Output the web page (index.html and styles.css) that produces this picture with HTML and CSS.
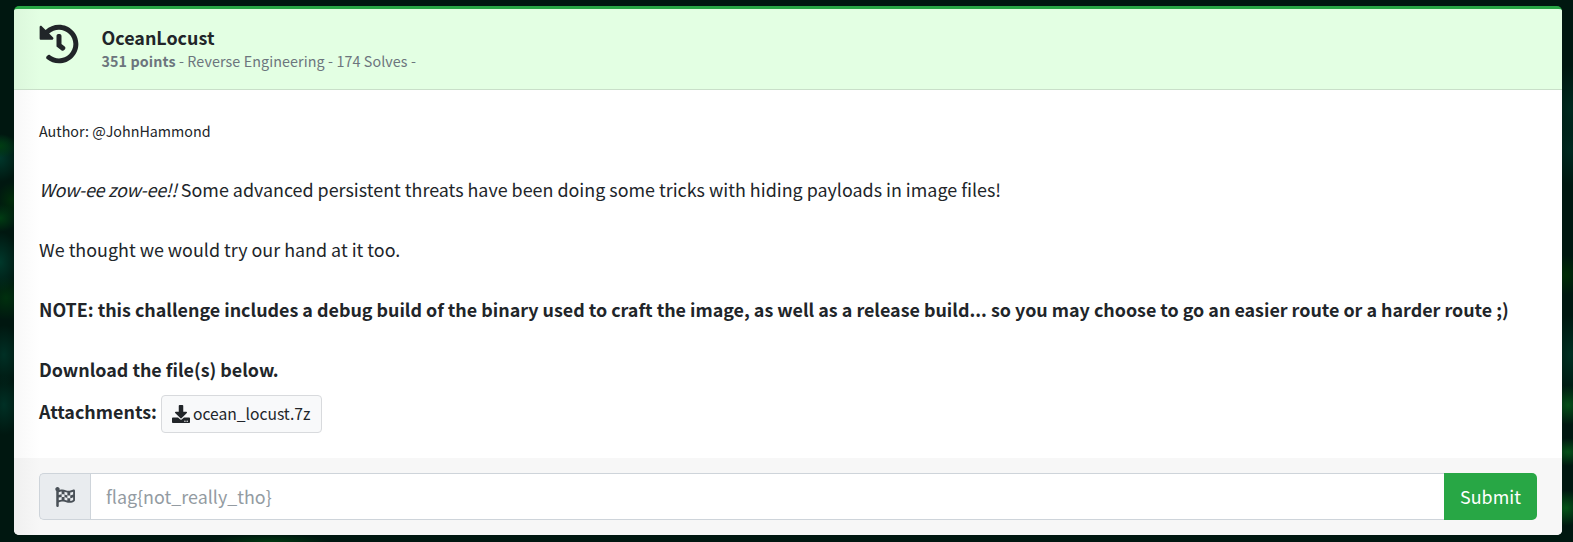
FILE: index.html
```html
<!DOCTYPE html>
<html lang="en">
<head>
<meta charset="utf-8">
<title>OceanLocust</title>
<link rel="stylesheet" href="styles.css">
</head>
<body>
<main class="card">
  <header class="card-header">
    <svg class="history-icon" viewBox="0 0 512 512"><path d="M504 255.531c.253 136.640-111.180 248.372-247.820 248.468-59.015.042-113.223-20.530-155.822-54.911-11.077-8.940-11.905-25.541-1.839-35.607l11.267-11.267c8.609-8.609 22.353-9.551 31.891-1.984C173.062 425.135 212.781 440 256 440c101.705 0 184-82.311 184-184 0-101.705-82.311-184-184-184-48.814 0-93.149 18.969-126.068 49.932l50.754 50.754c10.080 10.080 2.941 27.314-11.313 27.314H24c-8.837 0-16-7.163-16-16V38.627c0-14.254 17.234-21.393 27.314-11.314l49.372 49.372C129.209 34.136 189.552 8 256 8c136.810 0 247.747 110.780 248 247.531zm-180.912 78.784l9.823-12.630c8.138-10.463 6.253-25.542-4.210-33.679L288 256.349V152c0-13.255-10.745-24-24-24h-16c-13.255 0-24 10.745-24 24v135.651l65.409 50.874c10.463 8.137 25.541 6.253 33.679-4.210z"/></svg>
    <div class="heading">
      <h1 class="title">OceanLocust</h1>
      <p class="meta"><b>351 points</b> - Reverse Engineering - 174 Solves -</p>
    </div>
  </header>
  <section class="card-body">
    <p class="author">Author: @JohnHammond</p>
    <p class="text"><em>Wow-ee zow-ee!!</em> Some advanced persistent threats have been doing some tricks with hiding payloads in image files!</p>
    <p class="text">We thought we would try our hand at it too.</p>
    <p class="text strong">NOTE: this challenge includes a debug build of the binary used to craft the image, as well as a release build... so you may choose to go an easier route or a harder route ;)</p>
    <p class="text strong">Download the file(s) below.</p>
    <div class="attachments">
      <span class="label">Attachments:</span>
      <a class="file"><svg class="download-icon" viewBox="0 0 512 512"><path d="M216 0h80c13 0 24 11 24 24v168h88c18 0 27 22 14 34L270 378c-8 8-20 8-28 0L90 226c-13-12-4-34 14-34h88V24c0-13 11-24 24-24zm296 376v112c0 13-11 24-24 24H24c-13 0-24-11-24-24V376c0-13 11-24 24-24h147l49 49c20 20 52 20 72 0l49-49h147c13 0 24 11 24 24zM388 464a20 20 0 1 0-40 0 20 20 0 0 0 40 0zm64 0a20 20 0 1 0-40 0 20 20 0 0 0 40 0z"/></svg><span>ocean_locust.7z</span></a>
    </div>
  </section>
  <form class="card-footer">
    <span class="addon"><svg class="flag-icon" viewBox="0 0 512 512"><path d="M243.200 189.900V258c26.100 5.900 49.300 15.600 73.600 22.300v-68.200c-26-5.800-49.400-15.500-73.600-22.200zm223.300-123c-34.300 15.900-76.500 31.900-117 31.900C296 98.800 251.700 64 184.300 64c-25 0-47.300 4.400-68 12 2.800-7.300 4.100-15.200 3.600-23.600C118.100 24 94.800 1.200 66.300 0 34.300-1.300 8 24.300 8 56c0 19 9.500 35.800 24 45.900V488c0 13.300 10.700 24 24 24h16c13.300 0 24-10.700 24-24v-94.400c28.300-12.100 63.600-22.100 114.400-22.100 53.600 0 97.800 34.800 165.200 34.800 48.200 0 86.700-16.300 122.500-40.900 8.700-6 13.800-15.800 13.800-26.400V95.900c.1-23.300-24.200-38.800-45.400-29zM169.600 325.500c-25.800 2.700-50 8.200-73.600 16.600v-70.500c26.200-9.300 47.500-15 73.600-17.400v71.300zM464 191c-23.600 9.800-46.300 19.500-73.600 23.900V286c24.800-3.400 51.400-11.800 73.600-26v70.500c-25.100 16.100-48.500 24.700-73.600 27.100V286c-27 3.700-47.900 1.500-73.600-5.600v67.400c-23.900-7.400-47.300-16.700-73.600-21.300V258c-19.700-4.400-40.800-6.800-73.600-3.800v-70c-22.400 3.100-44.600 10.200-73.600 20.900v-70.500c33.200-12.200 50.100-19.800 73.600-22v71.600c27-3.700 48.400-1.300 73.600 5.700v-67.400c23.700 7.400 47.200 16.700 73.600 21.300v68.400c23.700 5.300 47.600 6.900 73.600 2.700V143c27-4.800 52.300-13.600 73.600-22.500z"/></svg></span>
    <input class="flag-input" type="text" placeholder="flag{not_really_tho}">
    <button class="submit" type="button">Submit</button>
  </form>
</main>
</body>
</html>
```

FILE: styles.css
```css
* { box-sizing: border-box; }
body {
  margin: 0;
  height: 542px;
  overflow: hidden;
  padding: 6px 11px 7px 14px;
  color: #212529;
  font: 17.9px/30px "Noto Sans CJK SC", "Noto Sans", sans-serif;
  background:
    radial-gradient(ellipse 18px 12px at 0 146px, #003d12, transparent),
    radial-gradient(ellipse 18px 14px at 0 218px, #003d12, transparent),
    radial-gradient(ellipse 16px 18px at 12px 200px, #002c0a, transparent),
    radial-gradient(ellipse 20px 24px at 0 158px, #00372b, transparent),
    radial-gradient(ellipse 20px 30px at 0 262px, #00382b, transparent),
    radial-gradient(ellipse 20px 22px at 6px 298px, #00300e, transparent),
    radial-gradient(ellipse 18px 30px at 4px 355px, #003025, transparent),
    radial-gradient(ellipse 18px 30px at 4px 405px, #003025, transparent),
    radial-gradient(ellipse 18px 20px at 1568px 405px, #045018, transparent),
    radial-gradient(ellipse 18px 14px at 1568px 452px, #045018, transparent),
    radial-gradient(ellipse 18px 18px at 1566px 508px, #045518, transparent),
    radial-gradient(ellipse 16px 20px at 1566px 275px, #002c05, transparent),
    radial-gradient(ellipse 18px 45px at 1570px 110px, #00291f, transparent),
    radial-gradient(ellipse 18px 35px at 1570px 150px, #002920, transparent),
    radial-gradient(ellipse 18px 40px at 1570px 355px, #003022, transparent),
    radial-gradient(ellipse 60px 8px at 270px 542px, #003810, transparent),
    #001710;
}
p, h1 { margin: 0; }
.card {
  height: 529px;
  display: flex;
  flex-direction: column;
  background: linear-gradient(to right, #f8f8f8, #fff 26px);
  border-top: 3px solid #28a745;
  border-radius: 5px;
  overflow: hidden;
}
.card-header {
  flex: none;
  display: flex;
  height: 81px;
  padding: 15px 25px 0;
  gap: 22.500px;
  background: linear-gradient(to right, #dcf7dc, #e3ffe3 26px);
  border-bottom: 1px solid #c9dfc9;
}
.history-icon { width: 40px; height: 40px; fill: #212529; }
.title { font-size: 17.9px; line-height: 24px; font-weight: 700; padding-top: 1px; }
.meta { font-size: 14.3px; line-height: 24px; letter-spacing: 0.1px; color: #6c757d; }
.card-body { flex: 1; padding: 26px 25px 0; }
.author { font-size: 14.3px; margin-bottom: 28px; }
.text { margin-bottom: 30px; white-space: nowrap; }
.text em { letter-spacing: -0.27px; }
.strong, .label { font-weight: 700; }
.strong { letter-spacing: -0.008px; }
.text:last-of-type { margin-bottom: 12px; }
.attachments { display: flex; gap: 4px; }
.file {
  display: flex;
  align-items: center;
  gap: 3px;
  width: 161px;
  height: 38px;
  margin-top: -1px;
  padding: 0 10px;
  font-size: 15.65px;
  background: #f8f9fa;
  border: 1px solid #d8dadd;
  border-radius: 4px;
}
.download-icon { width: 18px; height: 18px; fill: #212529; }
.card-footer {
  flex: none;
  display: flex;
  height: 77px;
  padding: 15px 25px;
  background: linear-gradient(to right, #f0f0f0, #f7f7f7 26px);
}
.addon {
  width: 51px;
  display: flex;
  align-items: center;
  justify-content: center;
  background: #e9ecef;
  border: 1px solid #ced4da;
  border-right: 0;
  border-radius: 5px 0 0 5px;
}
.flag-icon { width: 20px; height: 20px; fill: #495057; }
.flag-input {
  flex: 1;
  min-width: 0;
  padding: 0 15px 2px;
  font: inherit;
  background: #fff;
  border: 1px solid #ced4da;
  border-right: 0;
  border-radius: 0;
}
.flag-input::placeholder { color: #939ba2; opacity: 1; }
.submit {
  width: 93px;
  padding: 0 0 2px;
  font: inherit;
  color: #fff;
  background: #28a745;
  border: 0;
  border-radius: 0 5px 5px 0;
}
```
